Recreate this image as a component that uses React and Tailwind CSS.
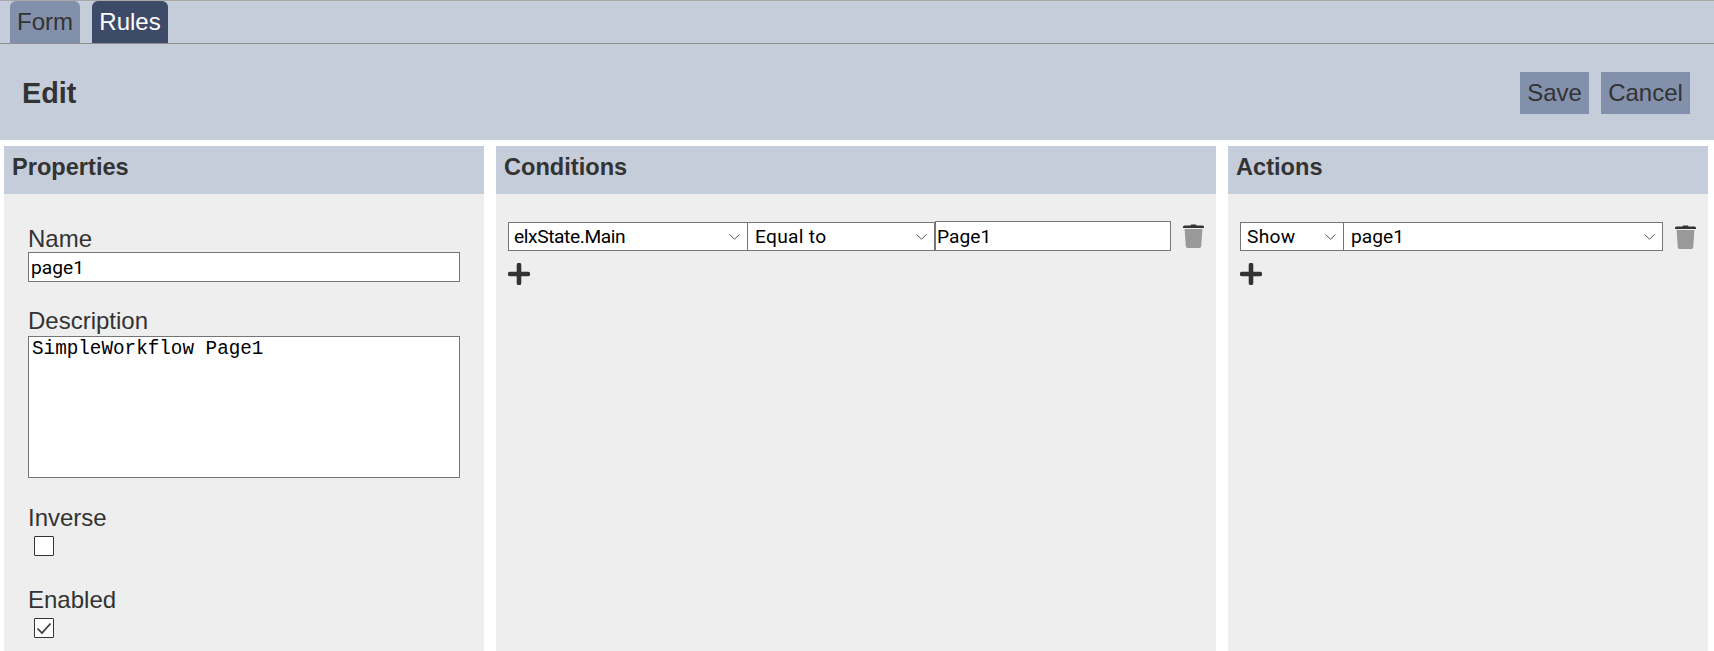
import React from 'react';

const sans = "font-['Liberation_Sans',Arial,sans-serif]";
const field = "font-['Roboto',sans-serif] text-[19.2px] text-black bg-white border border-[#767676] outline-none";

function TrashIcon() {
  return (
    <svg width="21" height="24" viewBox="0 0 21 24" className="shrink-0">
      <path d="M7.5 1.5 L8 0.4 H13 L13.5 1.5 H19.5 Q21 1.5 21 3 V4 H0 V3 Q0 1.5 1.5 1.5 Z" fill="#333333" />
      <path d="M1.6 5 H19.4 L18.2 22.3 Q18.1 24 16.4 24 H4.6 Q2.9 24 2.8 22.3 Z" fill="#999999" />
    </svg>
  );
}

function PlusIcon() {
  return (
    <svg width="22" height="22" viewBox="0 0 22 22">
      <path d="M11 2 V20 M2 11 H20" stroke="#333333" strokeWidth="4.6" strokeLinecap="round" fill="none" />
    </svg>
  );
}

function Panel({ title, width, children }) {
  return (
    <section className={`${width} flex flex-col bg-[#eeeeee]`}>
      <h2 className={`h-12 shrink-0 bg-[#c5ccda] pl-2 pb-[4px] flex items-center text-[23.6px] font-bold text-[#333333] ${sans}`}>{title}</h2>
      {children}
    </section>
  );
}

function Checkbox({ checked }) {
  return (
    <span className="relative block w-5 h-5 ml-[6px]">
      <input type="checkbox" defaultChecked={checked} className="block appearance-none w-5 h-5 bg-white border border-[#333333] rounded-[1px]" />
      {checked && (
        <svg viewBox="0 0 20 20" className="absolute inset-0 w-5 h-5 pointer-events-none">
          <path d="M3.5 10.5 L8 15 L16.5 5.5" stroke="#333333" strokeWidth="1.6" fill="none" />
        </svg>
      )}
    </span>
  );
}

function Select({ value, className, inner }) {
  return (
    <span className={`relative block shrink-0 ${className}`}>
      <select className={`${field} block w-full h-[29px] appearance-none ${inner}`}><option>{value}</option></select>
      <svg width="11" height="6" viewBox="0 0 11 6" className="absolute right-[8px] top-[12px] pointer-events-none">
        <path d="M0.5 0.5 L5.5 5.2 L10.5 0.5" stroke="#555555" strokeWidth="1" fill="none" />
      </svg>
    </span>
  );
}

export default function App() {
  return (
    <div className={`h-[651px] overflow-hidden bg-white flex flex-col text-[#333333] ${sans}`}>
      {/* tabs */}
      <div className="h-11 shrink-0 bg-[#c5ccda] border-t border-b border-t-[#a9a9a9] border-b-[#8f8f8f] flex items-end gap-3 pl-[10px] text-2xl">
        <div className="h-[42px] w-[70px] bg-[#8290ab] rounded-t-md flex items-center justify-center">Form</div>
        <div className="h-[42px] w-[76px] bg-[#3d4b68] text-white rounded-t-md flex items-center justify-center">Rules</div>
      </div>

      {/* title bar */}
      <div className="h-24 shrink-0 bg-[#c5ccda] flex items-center justify-between pl-[22px] pr-6">
        <h1 className="text-[28.8px] font-bold mt-1">Edit</h1>
        <div className="flex gap-3 text-2xl mt-[2px]">
          <button className="h-[42px] w-[69px] bg-[#8290ab]">Save</button>
          <button className="h-[42px] w-[89px] bg-[#8290ab]">Cancel</button>
        </div>
      </div>

      <div className="flex-1 min-h-0 flex gap-3 px-1 pt-[6px]">
        <Panel title="Properties" width="w-[480px]">
          <div className="pt-[31px] pl-6 pr-6 text-2xl leading-[27px] flex flex-col">
            <label>Name</label>
            <input defaultValue="page1" className={`${field} w-[432px] h-[30px] px-[2px]`} />
            <label className="mt-[25px]">Description</label>
            <textarea
              defaultValue="SimpleWorkflow Page1"
              className="mt-[2px] w-[432px] h-[142px] bg-white border border-[#767676] px-[3px] py-[1px] font-['Liberation_Mono',monospace] text-[19.3px] leading-[22px] text-black outline-none resize-none"
            />
            <label className="mt-[26px]">Inverse</label>
            <div className="mt-[5px]"><Checkbox /></div>
            <label className="mt-[30px]">Enabled</label>
            <div className="mt-[5px]"><Checkbox checked /></div>
          </div>
        </Panel>

        <Panel title="Conditions" width="w-[720px]">
          <div className="pt-[27px] pl-3 pr-3">
            <div className="flex items-center">
              <Select value="elxState.Main" className="w-[240px]" inner="pl-[5px] tracking-[-0.4px]" />
              <Select value="Equal to" className="w-[188px] -ml-px" inner="pl-[7px] tracking-[0.3px]" />
              <input defaultValue="Page1" className={`${field} w-[236px] h-[30px] px-[1px]`} />
              <span className="ml-[12px]"><TrashIcon /></span>
            </div>
            <div className="mt-3"><PlusIcon /></div>
          </div>
        </Panel>

        <Panel title="Actions" width="w-[480px]">
          <div className="pt-[28px] pl-3 pr-3">
            <div className="flex items-center">
              <Select value="Show" className="w-[104px]" inner="pl-[6px] tracking-[0.3px]" />
              <Select value="page1" className="w-[320px] -ml-px" inner="pl-[7px]" />
              <span className="ml-[12px]"><TrashIcon /></span>
            </div>
            <div className="mt-3"><PlusIcon /></div>
          </div>
        </Panel>
      </div>
    </div>
  );
}
